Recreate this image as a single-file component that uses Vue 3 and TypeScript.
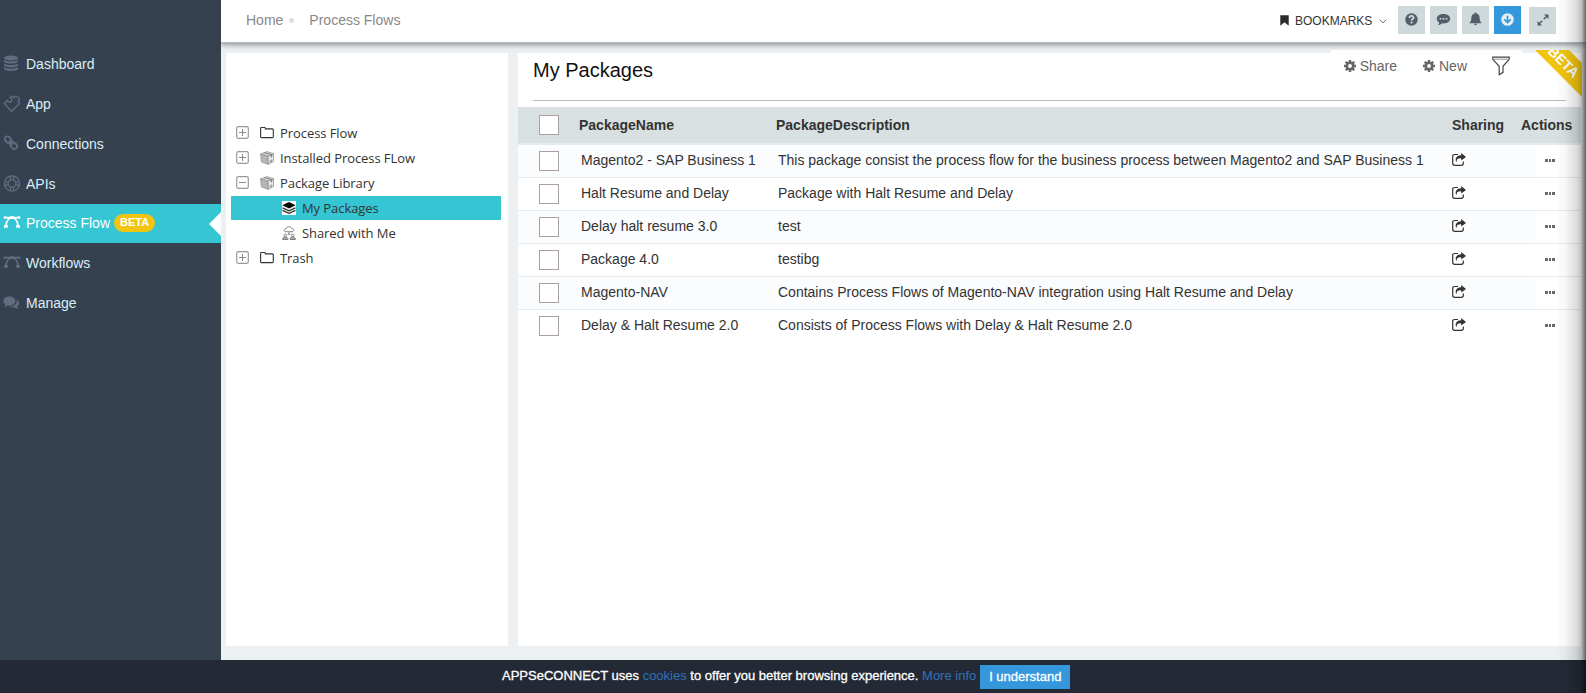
<script setup lang="ts">
interface NavItem { label: string; icon: string; active?: boolean; badge?: string }
interface TreeItem { label: string; icon: string; toggle?: 'plus' | 'minus'; child?: boolean; active?: boolean }

const nav: NavItem[] = [
  { label: 'Dashboard', icon: 'db' },
  { label: 'App', icon: 'puzzle' },
  { label: 'Connections', icon: 'link' },
  { label: 'APIs', icon: 'ring' },
  { label: 'Process Flow', icon: 'curve', active: true, badge: 'BETA' },
  { label: 'Workflows', icon: 'curve' },
  { label: 'Manage', icon: 'chat' },
]
const tree: TreeItem[] = [
  { label: 'Process Flow', icon: 'folder', toggle: 'plus' },
  { label: 'Installed Process FLow', icon: 'box', toggle: 'plus' },
  { label: 'Package Library', icon: 'box', toggle: 'minus' },
  { label: 'My Packages', icon: 'layers', child: true, active: true },
  { label: 'Shared with Me', icon: 'shared', child: true },
  { label: 'Trash', icon: 'folder', toggle: 'plus' },
]
const rows = [
  { name: 'Magento2 - SAP Business 1', text: 'This package consist the process flow for the business process between Magento2 and SAP Business 1' },
  { name: 'Halt Resume and Delay', text: 'Package with Halt Resume and Delay' },
  { name: 'Delay halt resume 3.0', text: 'test' },
  { name: 'Package 4.0', text: 'testibg' },
  { name: 'Magento-NAV', text: 'Contains Process Flows of Magento-NAV integration using Halt Resume and Delay' },
  { name: 'Delay & Halt Resume 2.0', text: 'Consists of Process Flows with Delay & Halt Resume 2.0' },
]
</script>

<template>
  <div class="page">
    <div class="main">
      <nav class="side">
        <a v-for="n in nav" :key="n.label" class="nav" :class="{ active: n.active }">
          <svg class="nav-icon" viewBox="0 0 18 18" width="18" height="18">
            <g v-if="n.icon === 'db'" fill="currentColor">
              <ellipse cx="8" cy="3" rx="7" ry="2.600" />
              <path d="M1 4.800c2 2.200 12 2.200 14 0v2c-1 2.400-13 2.400-14 0zM1 8.400c2 2.200 12 2.200 14 0v2c-1 2.400-13 2.400-14 0zM1 12c2 2.200 12 2.200 14 0v2c-1 2.600-13 2.600-14 0z" />
            </g>
            <path v-else-if="n.icon === 'puzzle'" fill="none" stroke="currentColor" stroke-width="1.400" stroke-linejoin="round" d="M1.400 8.200L4.200 5.200c.4 2 2.700 2.600 3.900 1.400s.7-3.300-1.200-3.700L8.700 1.100l2.200 2c.3-2.300 3-2.700 3.600-.7 2.200.2 2.700 2.900.4 3.900l1.700 1.900-8.200 8.200z" />
            <g v-else-if="n.icon === 'link'" fill="none" stroke="currentColor" stroke-width="1.900">
              <rect x="1.600" y="1.900" width="7" height="5.400" rx="2.700" transform="rotate(45 5 4.600)" />
              <rect x="7.200" y="7.900" width="7" height="5.400" rx="2.700" transform="rotate(45 10.700 10.600)" />
              <path d="M6 5.700l4 4" />
            </g>
            <g v-else-if="n.icon === 'ring'" fill="none" stroke="currentColor" stroke-width="1.300">
              <circle cx="9" cy="8.500" r="7.600" /><circle cx="9" cy="8.500" r="3.900" />
              <path d="M7.400 1v4.200M10.600 1v4.200M7.400 11.800V16M10.600 11.800V16M1.500 6.900h4.200M1.500 10.100h4.200M12.300 6.900h4.200M12.300 10.100h4.200" />
            </g>
            <g v-else-if="n.icon === 'curve'">
              <path fill="none" stroke="currentColor" stroke-width="1.600" d="M1 3.600h16M2.900 13C2.900 7.500 5.500 3.800 9 3.800s6.100 3.700 6.100 9.200" />
              <path fill="currentColor" d="M.7 2.600h2v2h-2zM15.300 2.600h2v2h-2zM7 2.200h4v2.800H7zM1 11h3.800v2.800H1zM13.200 11H17v2.800h-3.800z" />
            </g>
            <g v-else fill="currentColor">
              <path d="M6.400 2.500c3.400 0 6 2 6 4.600s-2.600 4.600-6 4.600c-.6 0-1.200 0-1.800-.2-.9.8-2 1.200-3.200 1.300.6-.7 1-1.400 1.100-2.200C1.100 9.700.3 8.500.3 7.100c0-2.600 2.700-4.600 6.100-4.600z" />
              <path d="M13.600 5.800c1.600.8 2.500 2 2.500 3.400 0 1.300-.8 2.500-2 3.300.1.800.6 1.500 1.300 2.200-1.400 0-2.500-.5-3.500-1.300-1.900.3-3.700 0-5-.9 4.300 0 7.500-2.600 6.700-6.700z" />
            </g>
          </svg>
          <span>{{ n.label }}</span>
          <b v-if="n.badge" class="badge">{{ n.badge }}</b>
        </a>
      </nav>

      <section class="content">
        <header class="top">
          <div class="crumbs"><span>Home</span><i class="dot"></i><span>Process Flows</span></div>
          <div class="tools">
            <svg class="mark" width="9" height="11" viewBox="0 0 9 11"><path fill="#2b2b2b" d="M.3.300h8.400v10.400L4.500 7.300.300 10.700z" /></svg>
            <span class="bm">BOOKMARKS</span>
            <svg class="chev" width="8" height="5" viewBox="0 0 8 5"><path d="M.8.700L4 3.900 7.200.700" fill="none" stroke="#666" /></svg>
            <span class="tb"><svg width="13" height="13" viewBox="0 0 13 13"><circle cx="6.500" cy="6.500" r="6.200" fill="#525e6c" /><path d="M4.400 5.100c0-2.900 4.200-2.700 4.200-.4 0 1.300-2 1.300-2 2.700M6.600 8.500v1.900" fill="none" stroke="#cfd8da" stroke-width="1.800" /></svg></span>
            <span class="tb"><svg width="15" height="13" viewBox="0 0 15 13"><path d="M7.500 1C11.300 1 14.200 3.100 14.200 5.700s-2.900 4.700-6.700 4.700l-1.200-.1C5 11.500 3.500 12 1.900 12.100c.8-.9 1.200-1.700 1.300-2.600C1.800 8.600.8 7.300.8 5.700.8 3.100 3.700 1 7.500 1z" fill="#525e6c" /><path d="M3.700 5h1.700v1.600H3.700zM6.700 5h1.700v1.600H6.700zM9.700 5h1.700v1.600H9.700z" fill="#cfd8da" /></svg></span>
            <span class="tb"><svg width="13" height="14" viewBox="0 0 13 14"><path d="M5.700.5h1.600v1.100c2.200.4 3.300 2 3.300 4 0 3 .8 4.300 2.200 5.700H.2C1.600 9.900 2.400 8.600 2.400 5.600c0-2 1.100-3.600 3.300-4zM5 11.700h3c0 1.900-3 1.900-3 0z" fill="#525e6c" /></svg></span>
            <span class="tb blue"><svg width="13" height="13" viewBox="0 0 13 13"><circle cx="6.500" cy="6.500" r="6.300" fill="#e3edf2" /><path d="M6.500 2.700v6.800M3.300 6.300l3.200 3.200 3.200-3.200" fill="none" stroke="#3598dc" stroke-width="1.700" /></svg></span>
            <span class="tb last"><svg width="12" height="12" viewBox="0 0 12 12"><path d="M7 .6h4.500v4.500zM.5 6.900v4.500H5z" fill="#525e6c" /><path d="M6.700 5.300L9.800 2.200M5.300 6.700L2.200 9.800" stroke="#525e6c" stroke-width="1.500" /></svg></span>
          </div>
        </header>

        <div class="panels">
          <aside class="tree">
            <div v-for="t in tree" :key="t.label" class="node" :class="{ active: t.active, child: t.child }">
              <svg v-if="t.toggle" class="toggle" width="13" height="13" viewBox="0 0 13 13">
                <rect x=".7" y=".7" width="11.600" height="11.600" rx="1.500" fill="#fff" stroke="#999" stroke-width="1.200" />
                <path :d="t.toggle === 'plus' ? 'M3 6.500h7M6.500 3v7' : 'M3 6.500h7'" stroke="#8a8a8a" />
              </svg>
              <svg class="node-icon" width="14" height="14" viewBox="0 0 14 14">
                <path v-if="t.icon === 'folder'" d="M.6 11V2.200q0-.7.7-.7h3.400q.6 0 .6.7v.7h7q1 0 1 1v6.900q0 .8-.8.8H1.300q-.7 0-.7-.6z" fill="none" stroke="#333" stroke-width="1.100" />
                <g v-else-if="t.icon === 'box'">
                  <path d="M.5 3L7 .6l6.500 2-5.300 2.500z" fill="#e4e4e4" stroke="#888" stroke-width=".7" />
                  <path d="M.5 3l7.700 2.200v8.200L1.300 11z" fill="#b5b5b5" stroke="#8d8d8d" stroke-width=".6" />
                  <path d="M8.200 5.200l5.300-2.500v7.800l-5.300 2.900z" fill="#ececec" stroke="#888" stroke-width=".7" />
                  <path d="M3.300 2l7.500 2v2.700l1.500-.8V3.300L5 1.300z" fill="#808080" />
                  <path d="M9.600 10l2.600-1.300M9.600 11.400l2.600-1.300" stroke="#777" stroke-width=".8" />
                </g>
                <g v-else-if="t.icon === 'layers'">
                  <path fill="#f8f8f8" d="M0 0h14v14H0z" />
                  <path d="M7 .9l6.600 3.300L7 7.400.4 4.200z" fill="#050505" />
                  <path d="M.6 6.800L7 9.800l6.400-3M.6 9.300L7 12.300l6.400-3" fill="none" stroke="#333" stroke-width="1.300" />
                </g>
                <g v-else fill="none" stroke="#777" stroke-width=".9">
                  <path d="M4 5.700C1.500 5.700 1.600 3 3.800 2.900 4.400.1 9 .1 9.600 2.300c2.600-.1 2.900 3.400.5 3.400zM7 5.700v2.500M5.600 8.200h2.800" />
                  <circle cx="3.300" cy="9.400" r="1.300" /><circle cx="10.700" cy="9.400" r="1.300" />
                  <path d="M.6 13.500c0-3.300 5.400-3.300 5.400 0zM8 13.500c0-3.300 5.400-3.300 5.400 0z" fill="#aaa" />
                </g>
              </svg>
              <span>{{ t.label }}</span>
            </div>
          </aside>

          <section class="packages">
            <div class="title-row">
              <h1>My Packages</h1>
              <div class="acts">
                <span v-for="a in ['Share', 'New']" :key="a" class="act">
                  <svg width="12" height="12" viewBox="0 0 12 12"><circle cx="6" cy="6" r="3.200" fill="none" stroke="#666" stroke-width="2.600" /><path d="M6 0v2.300M6 9.700V12M0 6h2.300M9.700 6H12M1.760 1.760l1.600 1.600M8.640 8.640l1.600 1.600M1.760 10.240l1.600-1.600M8.640 3.360l1.600-1.600" stroke="#666" stroke-width="2.400" /></svg>
                  {{ a }}
                </span>
                <svg class="filter" width="18" height="20" viewBox="0 0 18 20"><path d="M.8 1.200h16.400v2.100L11 10.300v6L7.200 18.700v-8.400L.8 3.300z" fill="#fff" stroke="#444" stroke-width="1.200" /><path d="M2 3.200h14" stroke="#777" stroke-width=".8" /></svg>
              </div>
            </div>
            <div class="rule"></div>
            <div class="grid head">
              <i class="check"></i><b>PackageName</b><b>PackageDescription</b><b>Sharing</b><b>Actions</b>
            </div>
            <div v-for="r in rows" :key="r.name" class="grid row">
              <i class="check"></i><span class="nm">{{ r.name }}</span><span class="ds">{{ r.text }}</span>
              <svg class="share" width="14" height="13" viewBox="0 0 14 13"><path d="M6 1.500H2.700q-2 0-2 2v6.800q0 2 2 2h6.600q2 0 2-2V8.600" fill="none" stroke="#333" stroke-width="1.200" /><path d="M9.200 0L14 3.900 9.200 7.600V5.400C6 5.200 4.700 6 4.500 9.300 2.300 5.600 4.800 2.200 9.200 2.200z" fill="#333" /></svg>
              <span class="more"><i></i><i></i><i></i></span>
            </div>
          </section>
        </div>
        <div class="ribbon"><b>BETA</b></div>
      </section>
    </div>
    <footer class="cookie">
      <span>APPSeCONNECT uses <a>cookies</a> to offer you better browsing experience. <a>More info</a></span>
      <button>I understand</button>
    </footer>
    <div class="edge"></div>
  </div>
</template>

<style>
body { margin: 0; overflow: hidden; }
</style>

<style scoped>
* { box-sizing: border-box; }
.page { position: relative; width: 1586px; height: 693px; overflow: hidden; font: 14px/20px "Liberation Sans", Arial, sans-serif; color: #333; background: #ecf0f3; display: flex; flex-direction: column; }
svg { flex: none; display: block; }
.main { height: 660px; display: flex; }
.side { width: 221px; padding-top: 44px; background: #364150; }
.nav { position: relative; display: flex; align-items: center; height: 40px; padding: 0 0 1px 3px; color: #d8eef8; }
.nav span { margin-left: 5px; }
.nav-icon { color: #606c80; }
.nav.active { height: 39px; padding-bottom: 1px; background: #36c6d3; color: #fff; }
.nav.active .nav-icon { color: #fff; }
.nav.active::after { content: ""; position: absolute; right: 0; top: 8px; border: 12px solid transparent; border-left: 0; border-right-color: #fff; }
.badge { margin: 0 0 0 4px; padding: 0 6px; height: 18px; border-radius: 9px; background: #f1c40f; font-size: 11px; line-height: 17px; }
.content { position: relative; width: 1365px; }
.top { position: relative; z-index: 2; height: 43px; background: #fff; border-bottom: 1px solid #b4b8ba; box-shadow: 0 2px 5px rgba(60, 60, 60, .5); display: flex; justify-content: space-between; }
.crumbs { display: flex; align-items: center; padding: 0 0 2px 25px; color: #888; }
.dot { width: 5px; height: 5px; border-radius: 50%; background: #ddd; margin: 0 15px 0 6px; }
.tools { display: flex; align-items: flex-start; padding: 6px 30px 0 0; }
.mark { margin: 9px 6px 0 0; }
.bm { font-size: 12px; line-height: 30px; width: 77px; }
.chev { margin: 13px 11px 0 7px; }
.tb { width: 27px; height: 28px; margin-right: 5px; background: #cfd8da; display: flex; align-items: center; justify-content: center; padding-bottom: 2px; }
.tb.blue { background: #3598dc; margin-right: 8px; }
.tb.last { height: 27px; margin: 1px 0 0; }
.panels { display: flex; gap: 10px; padding: 10px 0 0 5px; height: 603px; }
.tree { width: 282px; padding: 67px 7px 0 5px; background: #fff; font-family: "Open Sans", sans-serif; font-size: 13px; font-weight: 400; letter-spacing: -.07px; }
.node { height: 25px; display: flex; align-items: center; padding-left: 5px; }
.node.child { padding-left: 51px; }
.node.active { height: 24px; margin-top: 1px; background: #36c6d3; }
.toggle { margin-right: 11px; }
.node span { margin-left: 6px; }
.packages { width: 1063px; background: #fff; }
.title-row { height: 47px; display: flex; justify-content: space-between; padding: 0 59px 0 15px; }
h1 { margin: 4px 0 0; font-size: 20px; line-height: 27px; font-weight: 400; color: #111; }
.acts { display: flex; height: 29px; margin-top: -3px; padding: 3px 12px 0 13px; align-items: center; color: #666; background: #fff; }
.act { display: flex; align-items: center; gap: 4px; margin-right: 26px; }
.act + .filter { margin-left: -1px; }
.rule { height: 1px; margin: 0 15px 6px; background: #bbb; }
.grid { display: grid; grid-template-columns: 61px 197px 676px 83px 46px; align-items: center; }
.head { height: 38px; background: #d9e0e1; border-bottom: 2px solid #e6ebf0; }
.head b:last-child { margin-left: -14px; }
.check { width: 20px; height: 20px; margin-left: 21px; border: 1px solid #aaa0a2; background: #fff; }
.row { height: 33px; border-bottom: 1px solid #e5eaef; }
.row:nth-child(even) { background: #fbfcfd; }
.row:last-child { border: 0; height: 32px; }
.nm, .ds { padding: 0 0 2px 2px; white-space: nowrap; }
.share { margin: 0 0 4px; }
.more { height: 100%; display: flex; align-items: center; gap: 1px; padding: 0 0 1px 10px; background: #fff; }
.more i { width: 2.600px; height: 3px; background: #6a6a6a; }
.ribbon { position: absolute; z-index: 3; right: 4px; top: 50px; width: 60px; height: 50px; overflow: hidden; }
.ribbon b { position: absolute; left: -15px; top: -2px; width: 110px; height: 24px; padding-left: 5px; background: #f1c40f; color: #fff; transform: rotate(45deg); text-align: center; line-height: 25px; }
.cookie { position: relative; height: 33px; background: #232a36; color: #fff; font-size: 13px; display: flex; padding-left: 502px; }
.cookie span { line-height: 31px; white-space: nowrap; -webkit-text-stroke: .3px; }
.cookie a { color: #2f72b9; -webkit-text-stroke: 0; }
.cookie button { border: 0; margin: 5px 0 0 4px; width: 90px; height: 24px; padding: 0 0 1px; background: #3598dc; color: #fff; font: 13px "Liberation Sans", sans-serif; -webkit-text-stroke: .3px; }
.edge { position: absolute; z-index: 4; right: 0; top: 0; width: 30px; height: 693px; background: linear-gradient(90deg, transparent, rgba(0,0,0,.03) 30%, rgba(0,0,0,.14) 70%, rgba(0,0,0,.25) 85%, rgba(0,0,0,.6)); }
</style>
